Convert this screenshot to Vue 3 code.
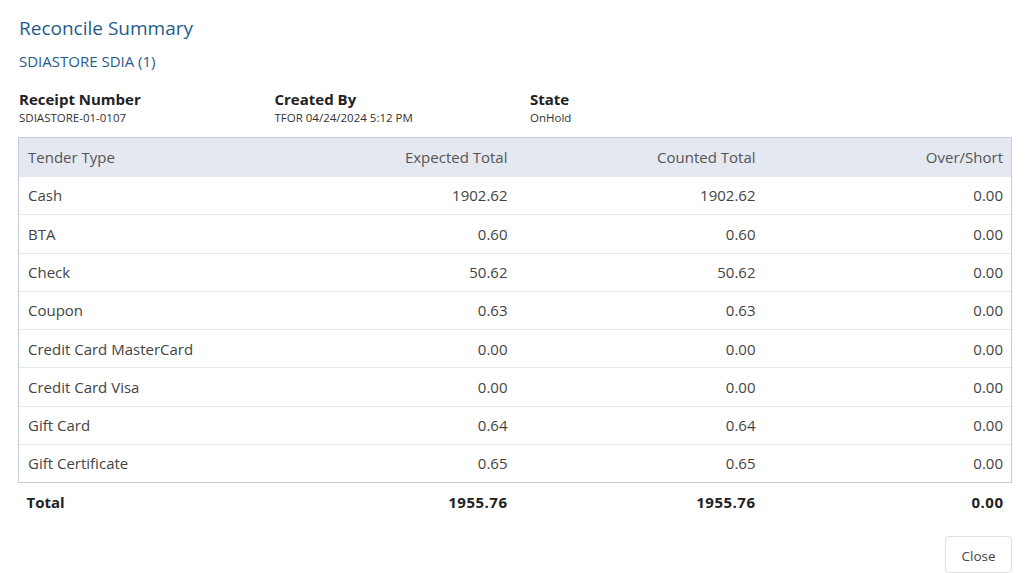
<template>
  <div class="modal">
    <h4 class="title">Reconcile Summary</h4>
    <div class="store">SDIASTORE SDIA (1)</div>

    <div class="meta">
      <div v-for="m in meta" :key="m.label" class="meta-col">
        <div class="meta-label">{{ m.label }}</div>
        <div class="meta-value">{{ m.value }}</div>
      </div>
    </div>

    <table class="grid">
      <colgroup>
        <col class="col-name" />
        <col class="col-num" />
        <col class="col-num" />
        <col class="col-num" />
      </colgroup>
      <thead>
        <tr>
          <th>Tender Type</th>
          <th class="num">Expected Total</th>
          <th class="num">Counted Total</th>
          <th class="num">Over/Short</th>
        </tr>
      </thead>
      <tbody>
        <tr v-for="row in rows" :key="row.name">
          <td>{{ row.name }}</td>
          <td class="num">{{ row.expected }}</td>
          <td class="num">{{ row.counted }}</td>
          <td class="num">{{ row.over }}</td>
        </tr>
      </tbody>
      <tfoot>
        <tr>
          <td>Total</td>
          <td class="num">1955.76</td>
          <td class="num">1955.76</td>
          <td class="num">0.00</td>
        </tr>
      </tfoot>
    </table>

    <div class="actions">
      <button class="close-btn">Close</button>
    </div>
  </div>
</template>

<script setup>
const meta = [
  { label: 'Receipt Number', value: 'SDIASTORE-01-0107' },
  { label: 'Created By', value: 'TFOR 04/24/2024 5:12 PM' },
  { label: 'State', value: 'OnHold' },
]

const rows = [
  { name: 'Cash', expected: '1902.62', counted: '1902.62', over: '0.00' },
  { name: 'BTA', expected: '0.60', counted: '0.60', over: '0.00' },
  { name: 'Check', expected: '50.62', counted: '50.62', over: '0.00' },
  { name: 'Coupon', expected: '0.63', counted: '0.63', over: '0.00' },
  { name: 'Credit Card MasterCard', expected: '0.00', counted: '0.00', over: '0.00' },
  { name: 'Credit Card Visa', expected: '0.00', counted: '0.00', over: '0.00' },
  { name: 'Gift Card', expected: '0.64', counted: '0.64', over: '0.00' },
  { name: 'Gift Certificate', expected: '0.65', counted: '0.65', over: '0.00' },
]
</script>

<style>
html, body {
  background: #fff;
}
</style>

<style scoped>
.modal {
  width: 1036px;
  height: 573px;
  box-sizing: border-box;
  padding: 15px 24px 0 18px;
  font-family: "Open Sans", "Liberation Sans", sans-serif;
  color: #444;
  overflow: hidden;
}
.title {
  margin: 0 0 0 1px;
  font-size: 19px;
  line-height: 26px;
  font-weight: 400;
  color: #1f5c8b;
}
.store {
  margin: 10px 0 0 1px;
  font-size: 15px;
  line-height: 20px;
  color: #1f5c8b;
}
.meta {
  display: flex;
  margin: 19px 0 0 1px;
}
.meta-col {
  width: 255.5px;
}
.meta-label {
  font-size: 15px;
  line-height: 18px;
  font-weight: 700;
  color: #222;
}
.meta-value {
  margin-top: 2px;
  font-size: 11.5px;
  line-height: 16px;
  color: #333;
}
.grid {
  width: 993px;
  margin-top: 11px;
  border-collapse: collapse;
  table-layout: fixed;
  font-size: 15px;
}
.col-name {
  width: 249px;
}
.col-num {
  width: 248px;
}
.grid th,
.grid td {
  padding: 0 8px 0 9px;
  text-align: left;
  font-weight: 400;
}
.grid th.num,
.grid td.num {
  text-align: right;
}
.grid thead tr {
  height: 39px;
  background: #e4e8f0;
  color: #555;
}
.grid thead th {
  border-top: 1px solid #c3cddd;
}
.grid thead th:first-child,
.grid tbody td:first-child {
  border-left: 1px solid #c3cddd;
}
.grid thead th:last-child,
.grid tbody td:last-child {
  border-right: 1px solid #c3cddd;
}
.grid tbody tr {
  height: 38.25px;
  border-bottom: 1px solid #e3e8ee;
}
.grid tbody tr:last-child {
  border-bottom: 1px solid #c3cddd;
}
.grid tfoot tr {
  height: 39px;
  color: #222;
}
.grid tfoot td {
  font-weight: 700;
  padding-left: 8px;
}
.grid tfoot td.num {
  letter-spacing: 0.5px;
}
.actions {
  display: flex;
  justify-content: flex-end;
  margin-top: 14px;
}
.close-btn {
  width: 67px;
  height: 37px;
  padding-top: 4px;
  background: #fff;
  border: 1px solid #dcdfe3;
  border-radius: 4px;
  font-family: inherit;
  font-size: 13.5px;
  color: #444;
}
</style>
